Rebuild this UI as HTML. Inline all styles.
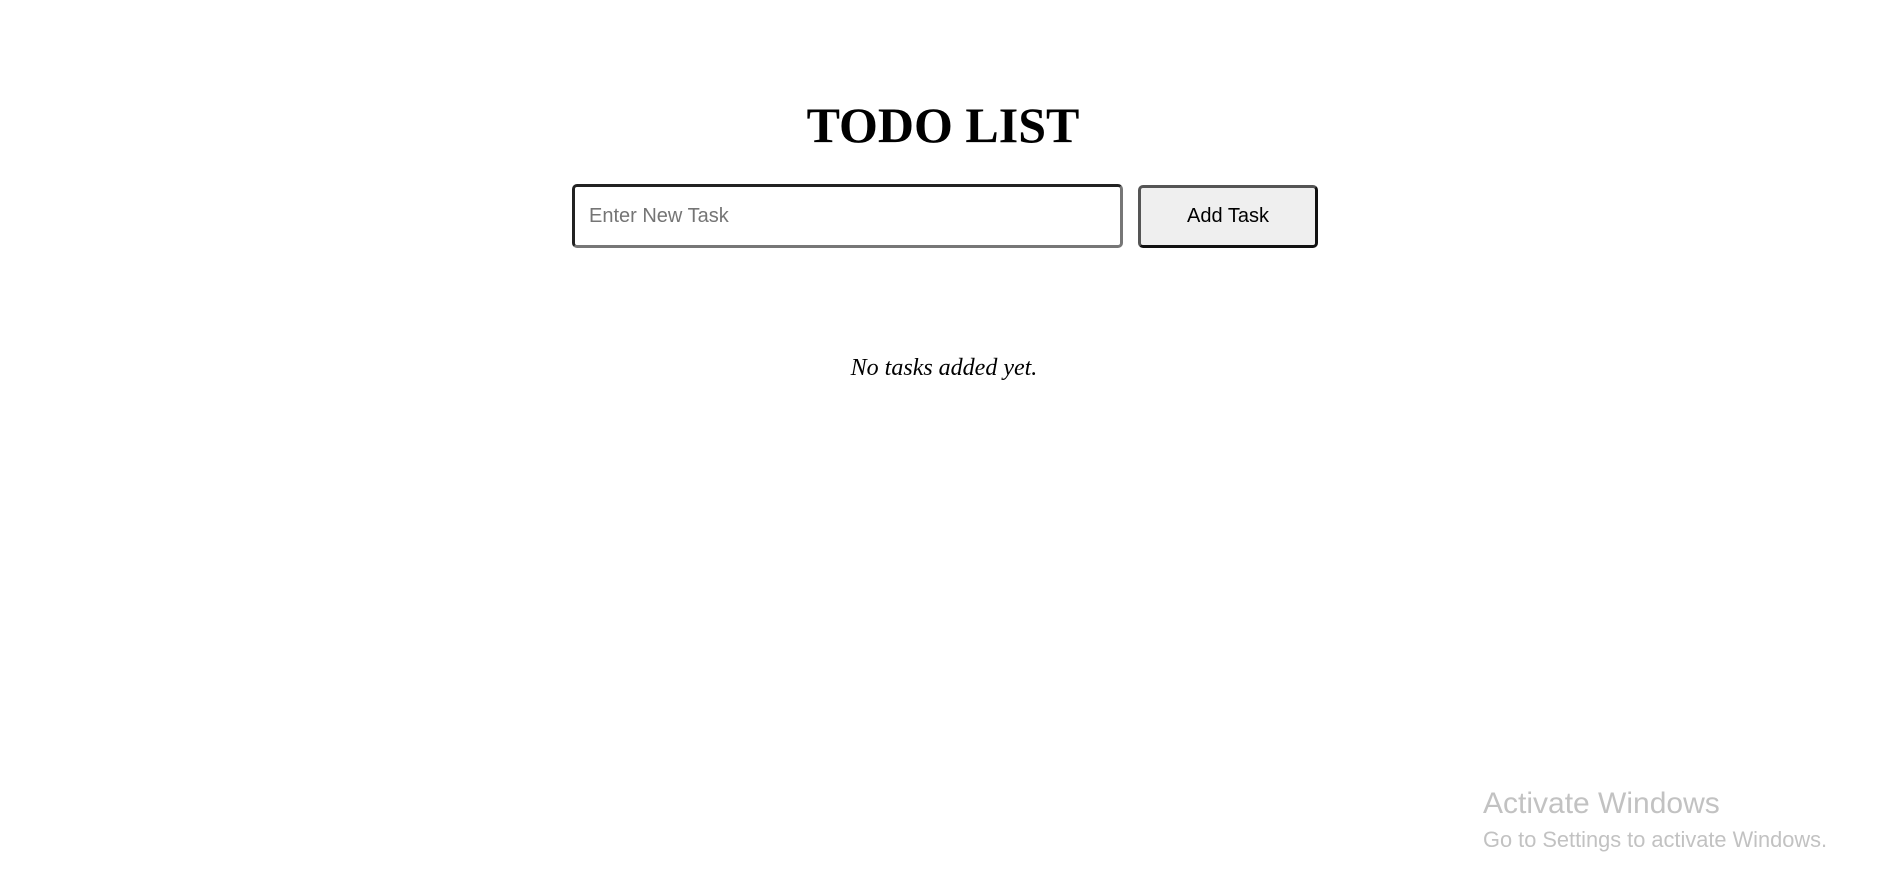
<!DOCTYPE html>
<html><head><style>
html,body{margin:0;padding:0;background:#fff;width:1896px;height:884px;overflow:hidden;position:relative}
h1{position:absolute;left:-5px;width:1896px;top:96px;margin:0;text-align:center;font:bold 50px "Liberation Serif",serif;color:#000}
.inp{position:absolute;left:572px;top:184px;border:3px solid;border-color:#222 #777 #777 #222;border-radius:5px;font:20px "Liberation Sans",sans-serif;color:#757575;line-height:58px;padding-left:14px;box-sizing:border-box;width:551px;height:64px}
.btn{position:absolute;left:1138px;top:185px;width:180px;height:63px;box-sizing:border-box;border:3px solid;border-color:#555 #111 #111 #555;border-radius:5px;background:#efefef;font:20px "Liberation Sans",sans-serif;color:#000;text-align:center;line-height:57px}
.empty{position:absolute;left:-4px;width:1896px;top:355px;text-align:center;font:italic 24px "Liberation Serif",serif}
.aw{position:absolute;left:1483px;top:787px;color:#c2c2c2;font-family:"Liberation Sans",sans-serif}
</style></head><body>
<h1>TODO LIST</h1>
<div class="inp">Enter New Task</div>
<div class="btn">Add Task</div>
<div class="empty">No tasks added yet.</div>
<div class="aw"><div style="font-size:30px">Activate Windows</div><div style="font-size:21.8px;margin-top:6px">Go to Settings to activate Windows.</div></div>
</body></html>
